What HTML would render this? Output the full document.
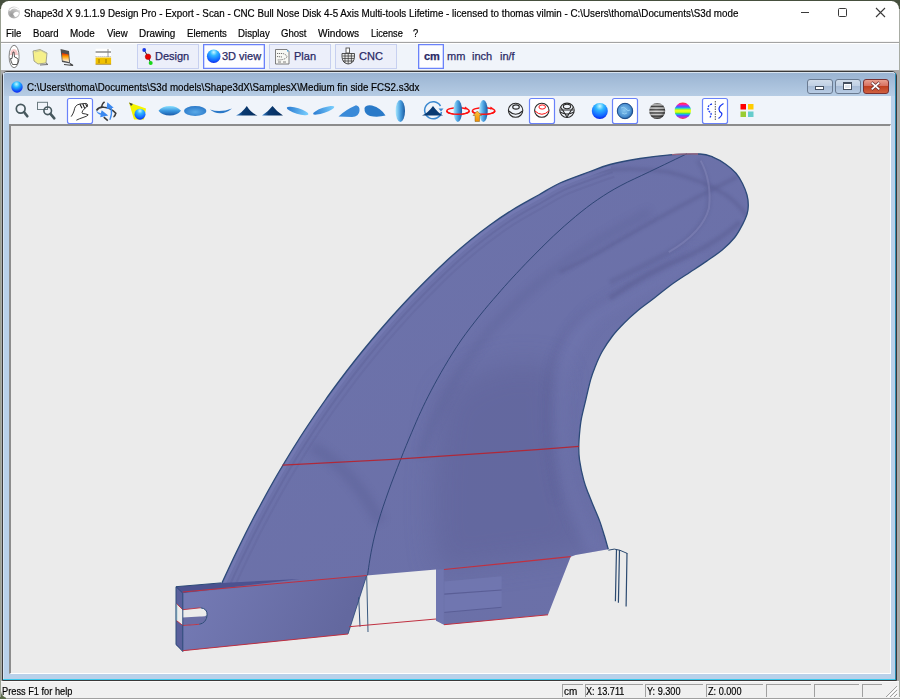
<!DOCTYPE html>
<html><head><meta charset="utf-8">
<style>
*{box-sizing:border-box;margin:0;padding:0}
html,body{width:900px;height:699px;overflow:hidden;position:relative;background:#f0f0f0;font-family:"Liberation Sans",sans-serif;}
.abs{position:absolute}
.r{position:absolute}
.tx{position:absolute;font-size:11px;line-height:13px;white-space:nowrap;color:#000;-webkit-text-stroke:0.2px #000;transform-origin:0 0}
.btn{position:absolute;border:1px solid #c7d0f0;background:#eceffa;}
.btn.on{border:1px solid #6a82fa;background:#fdfdff;box-shadow:inset 0 0 0 0.3px #6a82fa}
.bt{position:absolute;font-size:11px;line-height:13px;white-space:nowrap;color:#2a2a66;-webkit-text-stroke:0.25px #2a2a66}
.sp{position:absolute;top:684px;height:13px;border-top:1px solid #a0a0a0;border-left:1px solid #a0a0a0;}
</style></head><body>
<!-- desktop edges -->
<div class="r" style="left:0;top:0;width:900px;height:1px;background:#46503e"></div>
<div class="r" style="left:0;top:697px;width:900px;height:2px;background:linear-gradient(#f4f4f4 0,#f4f4f4 50%,#a0a0a0 50%)"></div>
<div class="r" style="left:0;top:690px;width:6px;height:9px;background:#5a6a48"></div>
<!-- title bar -->
<div class="r" style="left:1px;top:1px;width:898px;height:41px;background:#fff;border-radius:8px 8px 0 0"></div>
<div class="r" style="left:0;top:1px;width:8px;height:8px;background:#46503e"></div>
<div class="r" style="left:892px;top:1px;width:8px;height:8px;background:#46503e"></div>
<div class="r" style="left:1px;top:1px;width:898px;height:41px;background:#fff;border-radius:8px 8px 0 0"></div>
<div class="r" style="left:0;top:9px;width:1px;height:688px;background:#9aa092"></div>
<div class="r" style="left:899px;top:9px;width:1px;height:688px;background:#a8aca4"></div>
<svg class="abs" style="left:7px;top:5px" width="14" height="14" viewBox="0 0 14 14"><defs><radialGradient id="ig" cx="0.3" cy="0.7" r="0.9"><stop offset="0" stop-color="#999"/><stop offset="1" stop-color="#e0e0e0"/></radialGradient></defs><circle cx="7" cy="7.5" r="6" fill="url(#ig)"/><path d="M2.5 5.5 Q7 0.5 12 5" stroke="#fff" stroke-width="1.3" fill="none"/><path d="M6 9 Q9 5 12 8 Q11 12 8 12 Z" fill="#fff"/></svg>
<div class="tx" style="left:24px;top:7px;transform:scaleX(0.892)">Shape3d X 9.1.1.9 Design Pro - Export - Scan - CNC Bull Nose Disk 4-5 Axis Multi-tools Lifetime - licensed to thomas vilmin - C:\Users\thoma\Documents\S3d mode</div>
<div class="r" style="left:801px;top:12px;width:8px;height:1px;background:#3a3a3a"></div>
<div class="r" style="left:838px;top:8px;width:9px;height:9px;border:1px solid #3a3a3a;border-radius:1.5px"></div>
<svg class="abs" style="left:875px;top:7px" width="11" height="11" viewBox="0 0 11 11"><path d="M1 1L10 10M10 1L1 10" stroke="#3a3a3a" stroke-width="1.1"/></svg>
<!-- menu -->
<div class="tx" style="left:6px;top:27px;transform:scaleX(0.87)">File</div>
<div class="tx" style="left:33px;top:27px;transform:scaleX(0.87)">Board</div>
<div class="tx" style="left:70px;top:27px;transform:scaleX(0.9)">Mode</div>
<div class="tx" style="left:107px;top:27px;transform:scaleX(0.87)">View</div>
<div class="tx" style="left:139px;top:27px;transform:scaleX(0.9)">Drawing</div>
<div class="tx" style="left:187px;top:27px;transform:scaleX(0.87)">Elements</div>
<div class="tx" style="left:238px;top:27px;transform:scaleX(0.88)">Display</div>
<div class="tx" style="left:281px;top:27px;transform:scaleX(0.87)">Ghost</div>
<div class="tx" style="left:318px;top:27px;transform:scaleX(0.92)">Windows</div>
<div class="tx" style="left:371px;top:27px;transform:scaleX(0.84)">License</div>
<div class="tx" style="left:413px;top:27px;transform:scaleX(0.85)">?</div>
<div class="r" style="left:1px;top:41px;width:898px;height:1px;background:#f4f4f4"></div>
<div class="r" style="left:1px;top:42px;width:898px;height:1px;background:#a3a3a3"></div>
<!-- toolbar -->
<div class="r" style="left:1px;top:43px;width:898px;height:27px;background:#f0f4fa;border-top:1px solid #fff"></div>
<div class="btn" style="left:137px;top:44px;width:62px;height:25px"></div>
<div class="btn on" style="left:203px;top:44px;width:62px;height:25px"></div>
<div class="btn" style="left:269px;top:44px;width:62px;height:25px"></div>
<div class="btn" style="left:335px;top:44px;width:62px;height:25px"></div>
<div class="btn on" style="left:418px;top:44px;width:26px;height:25px"></div>
<svg class="abs" style="left:0;top:40px" width="400" height="32" viewBox="0 40 400 32">
<defs>
<radialGradient id="ball1" cx="0.5" cy="0.2" r="0.85"><stop offset="0" stop-color="#c8f8ff"/><stop offset="0.3" stop-color="#30b8ff"/><stop offset="0.75" stop-color="#1060ff"/><stop offset="1" stop-color="#0a10e0"/></radialGradient>
<linearGradient id="flop" x1="0" y1="0" x2="0" y2="1"><stop offset="0" stop-color="#e02000"/><stop offset="0.4" stop-color="#ffa000"/><stop offset="1" stop-color="#fff"/></linearGradient>
</defs>
<!-- surfboard -->
<ellipse cx="14.1" cy="56.5" rx="5" ry="11.2" fill="#fff" stroke="#707070" stroke-width="0.9"/>
<path d="M11 51 Q14 47 17 51 L18 55 L10 55 Z" fill="#f8c8c8"/>
<path d="M13 52 L14 52 L14.5 57 L17 58 Q18.5 59 18 62 L17 64.5 L12.5 64.5 L11 61 L10.5 58.5 L12 58.5 Z" fill="#fff" stroke="#303030" stroke-width="0.8"/>
<!-- folder -->
<path d="M33 51 L40 49.5 L47 53 L46 63 L38 64 L34 61 Z" fill="#f6f08a" stroke="#909080" stroke-width="0.8"/>
<path d="M35 52 L41 50.5 L46 53.5" fill="none" stroke="#c0c0a0" stroke-width="0.8"/>
<path d="M46 63 L48 64.5 L40 65" fill="none" stroke="#707070" stroke-width="1"/>
<!-- floppy -->
<path d="M60.5 49 L69 51 L70 63.5 L62 62 Z" fill="#505050"/>
<path d="M62 53 L68.5 54.5 L69 62 L62.5 60.5 Z" fill="url(#flop)"/>
<path d="M70 63.5 L73 65.5 L64 64.5" fill="none" stroke="#404040" stroke-width="1.2"/>
<!-- ruler -->
<rect x="95.6" y="48.7" width="15.5" height="9" fill="#fff"/>
<path d="M95.6 52 L111 52" stroke="#505050" stroke-width="1"/>
<path d="M95.6 56.5 L111 56.5" stroke="#909090" stroke-width="0.8" stroke-dasharray="1 1"/>
<path d="M108 49 L108 57" stroke="#808080" stroke-width="0.8"/>
<rect x="95.6" y="57.5" width="15.5" height="6.8" fill="#f0c000"/>
<path d="M95.6 64.3 L111.1 64.3" stroke="#a08040" stroke-width="0.8"/>
<path d="M99 59 L99 63 M106 59 L106 63" stroke="#806000" stroke-width="0.8"/>
<!-- design icon -->
<path d="M144.2 50 L148 56.7 L150.7 63" stroke="#303040" stroke-width="1"/>
<circle cx="144.2" cy="50" r="1.9" fill="#1a3ae8"/>
<circle cx="148" cy="56.7" r="2.8" fill="#e80000" stroke="#900" stroke-width="0.4"/>
<circle cx="150.7" cy="63" r="2" fill="#18d818"/>
<!-- 3d ball -->
<circle cx="213.7" cy="56.3" r="6.8" fill="url(#ball1)"/>
<!-- plan -->
<path d="M275.5 49.5 L287 49.5 L289 51.5 L289 64 L275.5 64 Z" fill="#f8f8f4" stroke="#707070" stroke-width="0.9"/>
<path d="M287 49.5 L289 51.5 L287 51.5 Z" fill="#40a0e0"/>
<path d="M277 53.5 L283 53.5 Q287 55 287 57 Q285 60 277 60 M277 56.5 L282 57" fill="none" stroke="#505050" stroke-width="0.8" stroke-dasharray="1.2 0.8"/>
<path d="M278 62 L281 62 M283 62 L286 62" stroke="#606060" stroke-width="0.8"/>
<!-- cnc -->
<rect x="346" y="48" width="3.5" height="5" fill="#fff" stroke="#505050" stroke-width="0.9"/>
<path d="M342 53.5 L354.5 53.5 L354.5 57 Q354 63.5 348.2 64 Q342.5 63.5 342 57 Z" fill="#e8e8e8" stroke="#404040" stroke-width="0.9"/>
<path d="M342.5 56 L354 56 M342.5 58.5 L354 58.5 M343 61 L353.5 61 M345 53.5 L345 63 M348.2 53.5 L348.2 64 M351.4 53.5 L351.4 63" stroke="#303030" stroke-width="0.7"/>
</svg>

<div class="bt" style="left:155px;top:50px">Design</div>
<div class="bt" style="left:222px;top:50px">3D view</div>
<div class="bt" style="left:294px;top:50px">Plan</div>
<div class="bt" style="left:359px;top:50px">CNC</div>
<div class="bt" style="left:424px;top:50px;font-weight:bold">cm</div>
<div class="bt" style="left:447px;top:50px">mm</div>
<div class="bt" style="left:472px;top:50px">inch</div>
<div class="bt" style="left:500px;top:50px">in/f</div>
<!-- workspace + MDI -->
<div class="r" style="left:1px;top:70px;width:898px;height:611px;background:#ababab"></div>
<div class="r" style="left:2px;top:71px;width:895px;height:610px;background:#b9d1ea;border:1px solid #3a3a3a;border-radius:5px 5px 0 0"></div>
<div class="r" style="left:3px;top:72px;width:893px;height:24px;background:linear-gradient(#9ab4d2,#b6cce4);border-radius:4px 4px 0 0;border-top:1px solid #d8e4f0"></div>
<div class="r" style="left:3px;top:73px;width:1px;height:606px;background:#d6e4f2"></div>
<div class="r" style="left:3px;top:679px;width:893px;height:1px;background:#3cc8ec"></div>
<div class="r" style="left:895px;top:73px;width:1px;height:607px;background:#2a8ab0"></div>
<div class="r" style="left:9px;top:96px;width:882px;height:28px;background:#f0f4fa"></div>
<div class="r" style="left:9px;top:124px;width:882px;height:550px;background:#ebebeb;border-left:2px solid #8c8c8c;border-top:2px solid #8c8c8c;border-right:1px solid #fff;border-bottom:1px solid #fff"></div>
<svg class="abs" style="left:11px;top:81px" width="12" height="12" viewBox="0 0 12 12"><defs><radialGradient id="bb" cx="0.45" cy="0.25" r="0.8"><stop offset="0" stop-color="#c0f8ff"/><stop offset="0.35" stop-color="#20b8ff"/><stop offset="1" stop-color="#0a10f0"/></radialGradient></defs><circle cx="6" cy="6" r="5.7" fill="url(#bb)"/></svg>
<div class="tx" style="left:27px;top:81px;transform:scaleX(0.889)">C:\Users\thoma\Documents\S3d models\Shape3dX\SamplesX\Medium fin side FCS2.s3dx</div>
<div class="r" style="left:807px;top:79px;width:26px;height:15px;border:1px solid #6a7a90;border-radius:3px;background:linear-gradient(#d0dcea 0%,#c0d0e4 45%,#a8bcd6 50%,#b8cce4 100%)"></div>
<div class="r" style="left:815px;top:86px;width:9px;height:4px;background:#fff;border:1px solid #445060"></div>
<div class="r" style="left:835px;top:79px;width:26px;height:15px;border:1px solid #6a7a90;border-radius:3px;background:linear-gradient(#d0dcea 0%,#c0d0e4 45%,#a8bcd6 50%,#b8cce4 100%)"></div>
<div class="r" style="left:843px;top:82px;width:9px;height:8px;background:#dfe6ee;border:1px solid #445060;border-top-width:2px;box-shadow:inset 0 0 0 1px #fff"></div>
<div class="r" style="left:863px;top:79px;width:26px;height:15px;border:1px solid #7a3030;border-radius:3px;background:linear-gradient(#e8a090 0%,#d87060 45%,#c04020 50%,#d06040 100%)"></div>
<svg class="abs" style="left:869px;top:80px" width="13" height="12" viewBox="0 0 13 12"><path d="M2.5 2.5L10.5 9.5M10.5 2.5L2.5 9.5" stroke="#6a3030" stroke-width="3"/><path d="M2.7 2.7L10.3 9.3M10.3 2.7L2.7 9.3" stroke="#fff" stroke-width="1.7"/></svg>
<svg class="abs" style="left:0;top:0" width="900" height="130" viewBox="0 0 900 130">
<defs>
<linearGradient id="lb1" x1="0" y1="0" x2="0" y2="1"><stop offset="0" stop-color="#8ae0ff"/><stop offset="0.5" stop-color="#3a98e0"/><stop offset="1" stop-color="#1a5aa8"/></linearGradient>
<radialGradient id="lb2" cx="0.5" cy="0.6" r="0.6"><stop offset="0" stop-color="#5aaae8"/><stop offset="1" stop-color="#2a78c8"/></radialGradient>
<linearGradient id="nv" x1="0" y1="0" x2="1" y2="0"><stop offset="0" stop-color="#3a8ad8"/><stop offset="0.3" stop-color="#0a3a72"/><stop offset="1" stop-color="#052c5c"/></linearGradient>
<linearGradient id="bl3" x1="0" y1="0" x2="1" y2="0"><stop offset="0" stop-color="#2a7ad0"/><stop offset="1" stop-color="#7ad0ff"/></linearGradient>
<linearGradient id="lens" x1="0" y1="0" x2="1" y2="0"><stop offset="0" stop-color="#a8e8ff"/><stop offset="0.5" stop-color="#4aa0e0"/><stop offset="1" stop-color="#1a5aa0"/></linearGradient>
<radialGradient id="ball" cx="0.5" cy="0.2" r="0.85"><stop offset="0" stop-color="#c8f8ff"/><stop offset="0.3" stop-color="#30b8ff"/><stop offset="0.75" stop-color="#1060ff"/><stop offset="1" stop-color="#0a10e0"/></radialGradient>
<radialGradient id="tball" cx="0.45" cy="0.45" r="0.6"><stop offset="0" stop-color="#8ac8f0"/><stop offset="0.7" stop-color="#4a90d0"/><stop offset="1" stop-color="#1a5090"/></radialGradient>
<linearGradient id="sball" x1="0" y1="0" x2="0" y2="1"><stop offset="0" stop-color="#606060"/><stop offset="0.12" stop-color="#d0d0d0"/><stop offset="0.22" stop-color="#404040"/><stop offset="0.32" stop-color="#e8e8e8"/><stop offset="0.42" stop-color="#303030"/><stop offset="0.52" stop-color="#f0f0f0"/><stop offset="0.62" stop-color="#303030"/><stop offset="0.72" stop-color="#d8d8d8"/><stop offset="0.82" stop-color="#404040"/><stop offset="0.92" stop-color="#b0b0b0"/><stop offset="1" stop-color="#505050"/></linearGradient>
<linearGradient id="rball" x1="0" y1="0" x2="0" y2="1"><stop offset="0" stop-color="#ff3a3a"/><stop offset="0.2" stop-color="#a040ff"/><stop offset="0.35" stop-color="#20c0ff"/><stop offset="0.5" stop-color="#e0ff20"/><stop offset="0.65" stop-color="#20d060"/><stop offset="0.8" stop-color="#8040ff"/><stop offset="1" stop-color="#ff3030"/></linearGradient>
<linearGradient id="orng" x1="0" y1="0" x2="0" y2="1"><stop offset="0" stop-color="#ffc040"/><stop offset="1" stop-color="#f09000"/></linearGradient>
<radialGradient id="rball2" cx="0.5" cy="0.5" r="0.5" gradientTransform="translate(0.5 0.5) scale(1 0.62) translate(-0.5 -0.5)"><stop offset="0" stop-color="#ffff40"/><stop offset="0.35" stop-color="#a0f020"/><stop offset="0.55" stop-color="#20d0e0"/><stop offset="0.75" stop-color="#8040ff"/><stop offset="0.9" stop-color="#ff3080"/><stop offset="1" stop-color="#ff4040"/></radialGradient>
<radialGradient id="shade" cx="0.45" cy="0.4" r="0.6"><stop offset="0" stop-color="#fff" stop-opacity="0.1"/><stop offset="0.7" stop-color="#000" stop-opacity="0.1"/><stop offset="1" stop-color="#000" stop-opacity="0.55"/></radialGradient>
<linearGradient id="rball3" x1="0" y1="0" x2="0" y2="1"><stop offset="0" stop-color="#ff3030"/><stop offset="0.12" stop-color="#ff20a0"/><stop offset="0.2" stop-color="#8040ff"/><stop offset="0.28" stop-color="#3070ff"/><stop offset="0.34" stop-color="#20d0e0"/><stop offset="0.4" stop-color="#80f040"/><stop offset="0.46" stop-color="#e8ff20"/><stop offset="0.58" stop-color="#e0ff10"/><stop offset="0.66" stop-color="#40e060"/><stop offset="0.72" stop-color="#20b0f0"/><stop offset="0.8" stop-color="#5050ff"/><stop offset="0.88" stop-color="#c030e0"/><stop offset="1" stop-color="#ff3030"/></linearGradient>
</defs>
<!-- magnifier -->
<circle cx="20.7" cy="108.7" r="4.4" fill="none" stroke="#47585e" stroke-width="1.7"/>
<path d="M24 112 L27.3 116.3" stroke="#47585e" stroke-width="2.6" stroke-linecap="round"/>
<!-- zoom window -->
<rect x="37.5" y="102.3" width="10" height="7.2" fill="none" stroke="#6a7a80" stroke-width="1"/>
<circle cx="47.7" cy="110.8" r="3.8" fill="none" stroke="#47585e" stroke-width="1.6"/>
<path d="M50.5 113.8 L54.3 118.3" stroke="#47585e" stroke-width="2.6" stroke-linecap="round"/>
<!-- hand button -->
<rect x="67.5" y="98.5" width="25" height="25" rx="2" fill="#fff" stroke="#6a82fa" stroke-width="1.2"/>
<path d="M71.2 116.6 Q73 114 74 111 Q74.5 108 75.5 106.5 Q77 104.5 80 104 L86 103.4 Q88 104 87.6 105.8 Q84.5 108.5 82.8 110.6 Q81.5 112.5 82.5 113.5 Q86 113.8 88.2 114.8 Q87.5 116.2 83 117.5 Q79 118.8 76.4 120.2" fill="none" stroke="#1e1e1e" stroke-width="0.9"/>
<path d="M80 104.2 L82 108.2 M82.8 103.8 L84.8 108.6 M85.6 104.2 L87.4 107" stroke="#1e1e1e" stroke-width="1.1"/>
<!-- rotate 3d -->
<path d="M96.5 110.5 Q99 106.5 104 107.3 Q111 108 115.8 113.3 Q115 116.5 113.5 117" fill="none" stroke="#3a3a3a" stroke-width="1.6"/>
<path d="M104.6 101.8 Q101.5 104 101.7 108" fill="none" stroke="#3a3a3a" stroke-width="1.5"/>
<path d="M103.8 117.2 L107.8 120.6" stroke="#3a3a3a" stroke-width="1.6"/>
<path d="M96.2 110.2 Q97.5 112.5 100.8 113.2 L101.7 110.3 L108.2 115.6 L100.2 117.2 L100.7 114.8 Q97 114 96.2 110.2 Z" fill="#3a88f0"/>
<path d="M109.3 119.8 Q111.5 114.5 110.6 108.4 L106.6 108.9 L107.3 102.3 L113.7 107.7 L111.9 108 Q113 114.5 110.4 120 Z" fill="#3a88f0"/>
<!-- light -->
<path d="M129 102.5 L146 108.5 L144 119.5 L134 119.5 Z" fill="#f4f400"/>
<path d="M129 102.5 L133 104 L131 106 Z" fill="#404040"/>
<circle cx="140" cy="114.2" r="5.5" fill="url(#ball)"/>
<!-- ellipses -->
<path d="M158.5 110.8 Q162 106 170 106 Q177 106 181 110.8 Q177 115.5 170 115.5 Q162 115.5 158.5 110.8 Z" fill="url(#lb1)"/>
<ellipse cx="195.2" cy="111" rx="11.2" ry="5" fill="url(#lb2)"/>
<path d="M210 109.5 Q220 113 232 108.5 Q226 113.5 220 113.3 Q214 113 210 109.5 Z" fill="#2a78c8"/>
<!-- triangles -->
<path d="M236 115.5 Q242 113 246.8 106 Q251 113 257.5 115.5 Z" fill="url(#nv)"/>
<path d="M262 115.5 Q268 112 272.5 106 Q277 112 283 115.5 Z" fill="url(#nv)"/>
<!-- blades -->
<ellipse cx="297.6" cy="111" rx="11.3" ry="2.8" fill="url(#bl3)" transform="rotate(17 297.6 111)"/>
<ellipse cx="323.7" cy="110.3" rx="11.2" ry="2.6" fill="url(#bl3)" transform="rotate(-19 323.7 110.3)"/>
<path d="M338.5 116.5 Q345 110 356 105.2 Q360 106 359.5 111 Q359 116.5 352 117 Z" fill="#3a8ad8"/>
<path d="M364.5 108 Q366 104.5 372 105.5 Q381 108 385.5 115.5 Q378 117.5 370 116 Q364 114 364.5 108 Z" fill="#2a7ac8"/>
<ellipse cx="400.3" cy="111" rx="4.7" ry="11" fill="url(#lens)"/>
<!-- rotate triangle -->
<path d="M440.5 106 A8.5 8.5 0 1 0 441.5 112" fill="none" stroke="#3a88d0" stroke-width="1.5"/>
<path d="M438.5 108.5 L443.5 108.5 L441 111.5 Z" fill="#3a88d0"/>
<path d="M422 115.5 Q428 113 433 106 Q438 113 443 115.5 Z" fill="#0a3a72"/>
<!-- lens with ring -->
<ellipse cx="458" cy="111" rx="11.2" ry="3.3" fill="none" stroke="#ff1010" stroke-width="1.4"/>
<ellipse cx="457.8" cy="111" rx="4.3" ry="11" fill="url(#lens)"/>
<path d="M446.8 111 A11.2 3.3 0 0 0 469.2 111" fill="none" stroke="#ff1010" stroke-width="1.4"/>
<path d="M465 106.5 L468 108.5 L464.5 109.5 Z" fill="#ff1010"/>
<ellipse cx="483.6" cy="111" rx="11.2" ry="3.3" fill="none" stroke="#ff1010" stroke-width="1.4"/>
<ellipse cx="483.4" cy="111" rx="4.3" ry="11" fill="url(#lens)"/>
<path d="M472.4 111 A11.2 3.3 0 0 0 494.8 111" fill="none" stroke="#ff1010" stroke-width="1.4"/>
<path d="M490.5 106.5 L493.5 108.5 L490 109.5 Z" fill="#ff1010"/>
<path d="M477.3 111 L481.5 115.5 L479.5 115.5 L479.5 121.5 L475 121.5 L475 115.5 L473 115.5 Z" fill="url(#orng)" stroke="#806020" stroke-width="0.5"/>
<!-- cups -->
<g fill="none" stroke="#2a2a2a" stroke-width="1.1">
<ellipse cx="515.6" cy="110.3" rx="7.2" ry="7"/>
<ellipse cx="516" cy="107" rx="3.3" ry="2.1"/>
<path d="M508.8 111 Q515.7 117.5 522.6 111"/>
</g>
<rect x="529.5" y="98.5" width="25" height="25" rx="2" fill="#fff" stroke="#6a82fa" stroke-width="1.2"/>
<g fill="none" stroke="#2a2a2a" stroke-width="1.1">
<ellipse cx="541.8" cy="110.3" rx="7.2" ry="7"/>
</g>
<g fill="none" stroke="#ff1010" stroke-width="1">
<ellipse cx="542.2" cy="107" rx="3.3" ry="2.1"/>
<path d="M535 111 Q541.9 117.5 548.8 111"/>
</g>
<g fill="none" stroke="#2a2a2a" stroke-width="1.1">
<circle cx="567" cy="110.3" r="7.2"/>
<ellipse cx="567" cy="106.5" rx="3.6" ry="2.2"/>
<path d="M560 112 Q567 116 574 112 M561 107.5 L567 117 L573 107.5 M560.5 110 L573.5 110"/>
</g>
<!-- balls -->
<circle cx="599.8" cy="111" r="8" fill="url(#ball)"/>
<rect x="612.5" y="98.5" width="25" height="25" rx="2" fill="#fff" stroke="#6a82fa" stroke-width="1.2"/>
<circle cx="625" cy="111" r="7.7" fill="url(#tball)" stroke="#1a4a88" stroke-width="1"/>
<path d="M621 108 Q624 106 626 109 Q628 112 630 110 M622 113 Q625 115 627 113" fill="none" stroke="#a0d8f8" stroke-width="0.8"/>
<circle cx="657.2" cy="111" r="8" fill="url(#sball)"/><circle cx="657.2" cy="111" r="8" fill="url(#shade)"/>
<circle cx="682.8" cy="110.8" r="8.2" fill="url(#rball3)"/>
<!-- S|S -->
<rect x="702.5" y="98.5" width="25" height="25" rx="2" fill="#fff" stroke="#6a82fa" stroke-width="1.2"/>
<path d="M712 104 Q708 105 708 108.5 Q708 111 710.5 112.5 Q712 114 710 117.5" fill="none" stroke="#1a3af0" stroke-width="1.3" stroke-dasharray="2 1"/>
<path d="M723.5 103.5 Q719 106 719 109 Q719 111.5 721.5 113 Q723 115 718.5 118.5" fill="none" stroke="#1a3af0" stroke-width="1.3"/>
<path d="M715.3 101 L715.3 121" stroke="#404040" stroke-width="0.9" stroke-dasharray="1.5 1"/>
<!-- colour squares -->
<rect x="740.5" y="104" width="5.5" height="5.5" fill="#f00"/>
<rect x="748" y="104" width="5.5" height="5.5" fill="#ffcc00"/>
<rect x="740.5" y="111.5" width="5.5" height="5.5" fill="#99cc33"/>
<rect x="748" y="111.5" width="5.5" height="5.5" fill="#66cccc"/>
</svg>

<svg class="abs" style="left:0;top:0" width="900" height="699" viewBox="0 0 900 699">
<defs>
<linearGradient id="fg" x1="0" y1="0" x2="1" y2="1"><stop offset="0" stop-color="#6d73ab"/><stop offset="1" stop-color="#6a6fa7"/></linearGradient>
<filter id="bl" x="-20%" y="-20%" width="140%" height="140%"><feGaussianBlur stdDeviation="6"/></filter>
<filter id="blz" x="-30%" y="-30%" width="160%" height="160%"><feGaussianBlur stdDeviation="14"/></filter>
<filter id="bl4" x="-30%" y="-30%" width="160%" height="160%"><feGaussianBlur stdDeviation="3.5"/></filter>
<filter id="bl5" x="-30%" y="-30%" width="160%" height="160%"><feGaussianBlur stdDeviation="0.6"/></filter>
<filter id="bl2" x="-20%" y="-20%" width="140%" height="140%"><feGaussianBlur stdDeviation="1.5"/></filter>
<linearGradient id="blk" gradientUnits="userSpaceOnUse" x1="200" y1="585" x2="330" y2="650"><stop offset="0" stop-color="#7379b3"/><stop offset="1" stop-color="#63689f"/></linearGradient>
<clipPath id="fc"><path d="M176,586.7 L221.9,583.0 C223.7,579.2 229.2,567.2 232.6,560.0 C236.0,552.8 239.0,546.7 242.3,540.0 C245.6,533.3 248.9,526.7 252.4,520.0 C255.9,513.3 259.5,506.7 263.1,500.0 C266.7,493.3 270.4,486.7 274.2,480.0 C278.0,473.3 282.0,466.7 286.0,460.0 C290.0,453.3 294.1,446.7 298.4,440.0 C302.6,433.3 307.0,426.7 311.5,420.0 C316.0,413.3 320.6,406.7 325.3,400.0 C330.0,393.3 334.9,386.7 339.9,380.0 C344.9,373.3 350.0,366.7 355.3,360.0 C360.6,353.3 366.0,346.7 371.6,340.0 C377.2,333.3 382.9,326.7 388.8,320.0 C394.7,313.3 400.8,306.7 407.1,300.0 C413.4,293.3 419.9,286.7 426.6,280.0 C433.3,273.3 440.1,266.7 447.4,260.0 C454.7,253.3 463.4,245.8 470.5,240.0 C477.6,234.2 483.1,230.0 490.0,225.0 C496.9,220.0 504.1,215.0 512.2,210.0 C520.3,205.0 530.6,199.5 538.6,195.0 C546.6,190.5 551.4,186.9 560.0,183.0 C568.6,179.1 581.7,174.6 590.0,171.5 C598.3,168.4 601.7,166.7 610.0,164.5 C618.3,162.3 630.0,160.1 640.0,158.5 C650.0,156.9 660.0,155.6 670.0,154.8 C680.0,154.1 692.9,153.6 700.0,154.0 C707.1,154.4 708.6,155.4 712.9,157.1 C717.2,158.8 721.9,161.5 725.7,164.2 C729.6,166.9 733.2,170.0 736.0,173.2 C738.8,176.4 740.7,179.9 742.5,183.5 C744.3,187.1 746.0,191.4 747.0,195.0 C748.0,198.6 748.3,202.1 748.3,205.3 C748.3,208.5 748.0,211.2 747.0,214.4 C746.0,217.6 744.5,220.8 742.5,224.6 C740.5,228.4 738.1,233.3 734.7,237.5 C731.3,241.7 726.9,246.1 722.2,250.0 C717.5,253.9 712.1,257.4 706.7,261.1 C701.3,264.8 695.6,268.5 690.0,272.2 C684.4,275.9 679.7,278.7 673.3,283.3 C666.9,287.9 657.6,295.5 651.7,300.0 C645.9,304.5 642.8,306.4 638.2,310.3 C633.6,314.2 628.3,318.9 624.0,323.2 C619.7,327.5 616.1,331.3 612.5,336.0 C608.9,340.7 605.1,346.4 602.2,351.5 C599.3,356.6 597.0,362.2 595.1,366.9 C593.2,371.6 592.1,374.4 590.6,379.8 C589.1,385.2 587.4,392.8 585.9,399.3 C584.4,405.8 582.5,412.8 581.4,418.6 C580.3,424.4 579.9,429.3 579.5,434.0 C579.1,438.7 578.8,442.6 578.8,446.9 C578.8,451.2 578.7,454.2 579.5,459.8 C580.3,465.4 582.3,474.8 583.8,480.4 C585.3,486.0 586.6,488.8 588.3,493.3 C590.0,497.8 592.2,502.8 594.1,507.5 C596.0,512.2 598.2,516.9 599.9,521.6 C601.6,526.3 603.0,531.2 604.4,535.8 C605.8,540.4 607.6,547.0 608.3,549.3 L575.5,555 L570.7,556.7 L548,614.8 L444,624.7 L436,620.7 L436,569.5 L366.7,575.5 L348,634 L182.7,650.7 L176,645.3 Z"/></clipPath>
</defs>
<path d="M176,586.7 L221.9,583.0 C223.7,579.2 229.2,567.2 232.6,560.0 C236.0,552.8 239.0,546.7 242.3,540.0 C245.6,533.3 248.9,526.7 252.4,520.0 C255.9,513.3 259.5,506.7 263.1,500.0 C266.7,493.3 270.4,486.7 274.2,480.0 C278.0,473.3 282.0,466.7 286.0,460.0 C290.0,453.3 294.1,446.7 298.4,440.0 C302.6,433.3 307.0,426.7 311.5,420.0 C316.0,413.3 320.6,406.7 325.3,400.0 C330.0,393.3 334.9,386.7 339.9,380.0 C344.9,373.3 350.0,366.7 355.3,360.0 C360.6,353.3 366.0,346.7 371.6,340.0 C377.2,333.3 382.9,326.7 388.8,320.0 C394.7,313.3 400.8,306.7 407.1,300.0 C413.4,293.3 419.9,286.7 426.6,280.0 C433.3,273.3 440.1,266.7 447.4,260.0 C454.7,253.3 463.4,245.8 470.5,240.0 C477.6,234.2 483.1,230.0 490.0,225.0 C496.9,220.0 504.1,215.0 512.2,210.0 C520.3,205.0 530.6,199.5 538.6,195.0 C546.6,190.5 551.4,186.9 560.0,183.0 C568.6,179.1 581.7,174.6 590.0,171.5 C598.3,168.4 601.7,166.7 610.0,164.5 C618.3,162.3 630.0,160.1 640.0,158.5 C650.0,156.9 660.0,155.6 670.0,154.8 C680.0,154.1 692.9,153.6 700.0,154.0 C707.1,154.4 708.6,155.4 712.9,157.1 C717.2,158.8 721.9,161.5 725.7,164.2 C729.6,166.9 733.2,170.0 736.0,173.2 C738.8,176.4 740.7,179.9 742.5,183.5 C744.3,187.1 746.0,191.4 747.0,195.0 C748.0,198.6 748.3,202.1 748.3,205.3 C748.3,208.5 748.0,211.2 747.0,214.4 C746.0,217.6 744.5,220.8 742.5,224.6 C740.5,228.4 738.1,233.3 734.7,237.5 C731.3,241.7 726.9,246.1 722.2,250.0 C717.5,253.9 712.1,257.4 706.7,261.1 C701.3,264.8 695.6,268.5 690.0,272.2 C684.4,275.9 679.7,278.7 673.3,283.3 C666.9,287.9 657.6,295.5 651.7,300.0 C645.9,304.5 642.8,306.4 638.2,310.3 C633.6,314.2 628.3,318.9 624.0,323.2 C619.7,327.5 616.1,331.3 612.5,336.0 C608.9,340.7 605.1,346.4 602.2,351.5 C599.3,356.6 597.0,362.2 595.1,366.9 C593.2,371.6 592.1,374.4 590.6,379.8 C589.1,385.2 587.4,392.8 585.9,399.3 C584.4,405.8 582.5,412.8 581.4,418.6 C580.3,424.4 579.9,429.3 579.5,434.0 C579.1,438.7 578.8,442.6 578.8,446.9 C578.8,451.2 578.7,454.2 579.5,459.8 C580.3,465.4 582.3,474.8 583.8,480.4 C585.3,486.0 586.6,488.8 588.3,493.3 C590.0,497.8 592.2,502.8 594.1,507.5 C596.0,512.2 598.2,516.9 599.9,521.6 C601.6,526.3 603.0,531.2 604.4,535.8 C605.8,540.4 607.6,547.0 608.3,549.3 L575.5,555 L570.7,556.7 L548,614.8 L444,624.7 L436,620.7 L436,569.5 L366.7,575.5 L348,634 L182.7,650.7 L176,645.3 Z" fill="url(#fg)"/>
<g clip-path="url(#fc)">
<path d="M445,395 Q500,350 560,370 Q555,460 590,550 L440,570 Q425,500 445,395 Z" fill="#5d6196" opacity="0.5" filter="url(#blz)"/>
<path d="M700,255 Q640,290 600,310 Q568,335 562,385 Q558,440 570,490 Q580,525 598,552" fill="none" stroke="#767cb6" stroke-width="14" opacity="0.35" filter="url(#bl)"/>
<path d="M690,252 Q620,290 585,312 Q552,338 548,385 Q544,440 556,500" fill="none" stroke="#5a5d92" stroke-width="5" opacity="0.25" filter="url(#bl4)"/>
<path d="M737,177 Q680,205 620,240 Q590,258 560,272" fill="none" stroke="#5a5d92" stroke-width="4" opacity="0.45" filter="url(#bl2)"/>
<path d="M560,180 Q610,163 668.7,172 Q703,180 725.9,194.9 Q740,205 748,218" fill="none" stroke="#5a5d92" stroke-width="4" opacity="0.45" filter="url(#bl2)"/>
<path d="M610,298 Q645.8,272.8 690,255 Q720,240 740,222" fill="none" stroke="#5a5d92" stroke-width="5" opacity="0.45" filter="url(#bl2)"/>
<path d="M698,160 Q712,182 708,208 Q702,232 668.7,252.2 Q640,268 610,282" fill="none" stroke="#5a5d92" stroke-width="5" opacity="0.35" filter="url(#bl2)"/>
<path d="M700.7,160.6 Q712,182 709,208 Q703,232 668.7,252.2" fill="none" stroke="#9496c6" stroke-width="2" opacity="0.35" filter="url(#bl5)"/>
<path d="M224.2,584.1 C225.9,580.2 231.5,568.2 234.9,561.1 C238.3,553.9 241.2,547.8 244.5,541.1 C247.8,534.5 251.2,527.8 254.6,521.2 C258.1,514.5 261.7,507.8 265.3,501.2 C268.9,494.5 272.6,487.9 276.4,481.2 C280.2,474.6 284.1,467.9 288.1,461.3 C292.2,454.6 296.3,448.0 300.5,441.3 C304.7,434.7 309.1,428.0 313.6,421.4 C318.0,414.7 322.6,408.1 327.3,401.4 C332.1,394.8 336.9,388.1 341.9,381.5 C346.9,374.9 352.0,368.2 357.3,361.6 C362.5,354.9 367.9,348.3 373.5,341.6 C379.1,335.0 384.8,328.3 390.7,321.7 C396.6,315.0 402.6,308.4 408.9,301.7 C415.2,295.1 421.7,288.4 428.4,281.8 C435.1,275.1 441.8,268.5 449.1,261.8 C456.4,255.2 465.0,247.7 472.1,241.9 C479.1,236.1 484.6,232.0 491.5,227.0 C498.4,222.1 505.5,217.1 513.5,212.1 C521.6,207.2 531.9,201.7 539.8,197.2 C547.8,192.7 552.5,189.2 561.0,185.3 C569.5,181.4 582.6,176.9 590.9,173.8 C599.2,170.8 607.5,168.0 610.8,166.9" fill="none" stroke="#7a80ba" stroke-width="3" opacity="0.5"/>
<path d="M229.2,586.4 C230.9,582.6 236.4,570.6 239.8,563.4 C243.2,556.3 246.2,550.2 249.5,543.5 C252.7,536.9 256.1,530.3 259.5,523.7 C262.9,517.1 266.5,510.4 270.1,503.8 C273.7,497.2 277.4,490.6 281.1,484.0 C284.9,477.4 288.8,470.8 292.8,464.1 C296.8,457.5 300.9,450.9 305.1,444.3 C309.4,437.7 313.7,431.1 318.1,424.5 C322.6,417.9 327.1,411.2 331.8,404.6 C336.5,398.0 341.3,391.4 346.3,384.8 C351.3,378.2 356.3,371.6 361.6,365.0 C366.8,358.4 372.2,351.7 377.7,345.1 C383.3,338.5 388.9,331.9 394.8,325.3 C400.6,318.7 406.7,312.1 412.9,305.5 C419.2,298.9 425.6,292.3 432.2,285.7 C438.9,279.1 445.6,272.5 452.8,265.9 C460.0,259.3 468.6,251.9 475.6,246.2 C482.6,240.4 487.9,236.4 494.7,231.5 C501.5,226.6 508.4,221.7 516.4,216.8 C524.4,211.9 534.7,206.4 542.5,202.0 C550.4,197.5 555.0,194.1 563.3,190.3 C571.7,186.4 584.6,182.0 592.8,179.0 C601.0,176.0 609.3,173.2 612.6,172.1" fill="none" stroke="#5c6096" stroke-width="2" opacity="0.35" filter="url(#bl5)"/>
<path d="M233.7,588.5 C235.5,584.7 241.0,572.7 244.3,565.6 C247.7,558.5 250.7,552.4 254.0,545.8 C257.2,539.2 260.5,532.6 263.9,526.0 C267.4,519.4 270.9,512.8 274.5,506.2 C278.1,499.6 281.7,493.0 285.5,486.5 C289.2,479.9 293.1,473.3 297.1,466.7 C301.1,460.2 305.2,453.6 309.4,447.0 C313.6,440.4 317.9,433.8 322.3,427.3 C326.7,420.7 331.2,414.1 335.9,407.5 C340.6,401.0 345.4,394.4 350.3,387.8 C355.2,381.2 360.3,374.6 365.5,368.1 C370.7,361.5 376.1,354.9 381.6,348.3 C387.1,341.8 392.7,335.2 398.5,328.6 C404.4,322.1 410.3,315.5 416.5,308.9 C422.8,302.4 429.2,295.8 435.8,289.2 C442.4,282.7 449.0,276.1 456.2,269.6 C463.3,263.1 471.8,255.7 478.8,250.0 C485.7,244.4 490.9,240.4 497.6,235.6 C504.3,230.7 511.1,225.9 519.0,221.1 C526.9,216.2 537.3,210.7 545.0,206.3 C552.7,201.9 557.2,198.6 565.4,194.8 C573.7,191.1 586.4,186.7 594.5,183.7 C602.7,180.7 611.0,177.9 614.3,176.8" fill="none" stroke="#5c6096" stroke-width="2" opacity="0.25" filter="url(#bl5)"/>
<path d="M650,212 Q550,262 490,330 Q445,385 420,455" fill="none" stroke="#5c6096" stroke-width="9" opacity="0.3" filter="url(#bl4)"/>
<path d="M312,447 Q352,468 380,522" fill="none" stroke="#5c6096" stroke-width="12" opacity="0.4" filter="url(#bl4)"/>
<path d="M176,586.7 L221.1,582.9 L300,579 L182.8,593.2 Z" fill="#4c5290"/>
<path d="M176,586.7 L182.8,593.2 L182.8,651.6 L176,644.3 Z" fill="#5a609c"/>
<path d="M182.8,593.2 L366.7,575.5 L348,634 L182.8,651.6 Z" fill="url(#blk)"/>
<path d="M444.3,581.5 L501.6,576.3 L501.6,607.3 L444.3,612.4 Z" fill="#7278b2" opacity="0.8"/>
<path d="M444.3,594.1 L501.6,590" stroke="#5a5e96" stroke-width="1.2"/>
<path d="M444.3,612.4 L501.6,607.3" stroke="#5a5e96" stroke-width="1"/>
<path d="M436,569.5 L443.7,569.5 L443.7,625.6 L436,618.7 Z" fill="#7278b2" opacity="0.8"/>
</g>
<!-- slot -->
<path d="M176.5,603.6 L182.8,609.7 L200.4,607.8 Q207.5,608.5 207.1,615.1 Q206.5,623 199.2,624.3 L182.8,625.5 L176.5,620.6 Z" fill="#ebebeb"/>
<path d="M182.8,617.5 L200,616.5 Q205,617 207,615 Q206.5,623 199.2,624.3 L182.8,625.5 Z" fill="#6a6ea6"/>
<path d="M176.5,604 L176.5,620.5" stroke="#a8d0d8" stroke-width="2"/>
<path d="M200.4,607.8 Q207.5,608.5 207.1,615.1 Q206.5,623 199.2,624.3" fill="none" stroke="#2c4a78" stroke-width="1"/>
<path d="M176.5,603.6 L182.8,609.7 L200.4,607.8" fill="none" stroke="#c03040" stroke-width="0.9"/>
<path d="M176.5,620.6 L182.8,625.5 L199.2,624.3" fill="none" stroke="#c03040" stroke-width="0.9"/>
<path d="M176,586.7 L176,644.3 L182.8,651.6 L182.8,593.2 L176,586.7 L221.1,582.9" fill="none" stroke="#2c4a78" stroke-width="1"/>
<path d="M358.7,597.3 L360,626.7" stroke="#2c4a78" stroke-width="1"/>
<path d="M348,634 L366.7,575.5" stroke="#2c4a78" stroke-width="0.8"/>
<path d="M608.4,550.2 L614.3,549.1 L619.7,550.2 L627.2,553.4" fill="none" stroke="#2c4a70" stroke-width="1"/>
<path d="M616.5,549 L615.4,601.2 M619.5,550 L618.4,602.8 M627,553 L626.1,606.6" stroke="#2c4a70" stroke-width="1.2"/>

<path d="M221.9,583.0 C223.7,579.2 229.2,567.2 232.6,560.0 C236.0,552.8 239.0,546.7 242.3,540.0 C245.6,533.3 248.9,526.7 252.4,520.0 C255.9,513.3 259.5,506.7 263.1,500.0 C266.7,493.3 270.4,486.7 274.2,480.0 C278.0,473.3 282.0,466.7 286.0,460.0 C290.0,453.3 294.1,446.7 298.4,440.0 C302.6,433.3 307.0,426.7 311.5,420.0 C316.0,413.3 320.6,406.7 325.3,400.0 C330.0,393.3 334.9,386.7 339.9,380.0 C344.9,373.3 350.0,366.7 355.3,360.0 C360.6,353.3 366.0,346.7 371.6,340.0 C377.2,333.3 382.9,326.7 388.8,320.0 C394.7,313.3 400.8,306.7 407.1,300.0 C413.4,293.3 419.9,286.7 426.6,280.0 C433.3,273.3 440.1,266.7 447.4,260.0 C454.7,253.3 463.4,245.8 470.5,240.0 C477.6,234.2 483.1,230.0 490.0,225.0 C496.9,220.0 504.1,215.0 512.2,210.0 C520.3,205.0 530.6,199.5 538.6,195.0 C546.6,190.5 551.4,186.9 560.0,183.0 C568.6,179.1 581.7,174.6 590.0,171.5 C598.3,168.4 601.7,166.7 610.0,164.5 C618.3,162.3 630.0,160.1 640.0,158.5 C650.0,156.9 660.0,155.6 670.0,154.8 C680.0,154.1 692.9,153.6 700.0,154.0 C707.1,154.4 708.6,155.4 712.9,157.1 C717.2,158.8 721.9,161.5 725.7,164.2 C729.6,166.9 733.2,170.0 736.0,173.2 C738.8,176.4 740.7,179.9 742.5,183.5 C744.3,187.1 746.0,191.4 747.0,195.0 C748.0,198.6 748.3,202.1 748.3,205.3 C748.3,208.5 748.0,211.2 747.0,214.4 C746.0,217.6 744.5,220.8 742.5,224.6 C740.5,228.4 738.1,233.3 734.7,237.5 C731.3,241.7 726.9,246.1 722.2,250.0 C717.5,253.9 712.1,257.4 706.7,261.1 C701.3,264.8 695.6,268.5 690.0,272.2 C684.4,275.9 679.7,278.7 673.3,283.3 C666.9,287.9 657.6,295.5 651.7,300.0 C645.9,304.5 642.8,306.4 638.2,310.3 C633.6,314.2 628.3,318.9 624.0,323.2 C619.7,327.5 616.1,331.3 612.5,336.0 C608.9,340.7 605.1,346.4 602.2,351.5 C599.3,356.6 597.0,362.2 595.1,366.9 C593.2,371.6 592.1,374.4 590.6,379.8 C589.1,385.2 587.4,392.8 585.9,399.3 C584.4,405.8 582.5,412.8 581.4,418.6 C580.3,424.4 579.9,429.3 579.5,434.0 C579.1,438.7 578.8,442.6 578.8,446.9 C578.8,451.2 578.7,454.2 579.5,459.8 C580.3,465.4 582.3,474.8 583.8,480.4 C585.3,486.0 586.6,488.8 588.3,493.3 C590.0,497.8 592.2,502.8 594.1,507.5 C596.0,512.2 598.2,516.9 599.9,521.6 C601.6,526.3 603.0,531.2 604.4,535.8 C605.8,540.4 607.6,547.0 608.3,549.3" fill="none" stroke="#2c4a78" stroke-width="1.3"/>
<path d="M687.0,153.7 C680.8,156.7 660.7,166.4 649.6,171.7 C638.6,177.0 629.5,180.9 620.9,185.5 C612.3,190.1 605.4,194.3 597.8,199.5 C590.2,204.6 583.0,210.3 575.6,216.4 C568.2,222.5 560.7,229.2 553.3,236.1 C545.9,243.1 538.0,251.1 531.1,258.1 C524.2,265.1 517.9,271.9 512.2,278.0 C506.6,284.1 502.6,288.6 497.3,294.8 C491.9,300.9 486.2,307.5 480.2,315.0 C474.1,322.6 467.1,331.6 461.2,340.1 C455.3,348.6 449.7,357.7 444.7,366.2 C439.7,374.6 435.1,383.1 431.1,390.7 C427.1,398.3 424.0,404.6 420.8,411.6 C417.5,418.6 415.0,424.7 411.6,432.7 C408.2,440.7 404.3,450.0 400.5,459.8 C396.7,469.5 392.2,480.7 388.6,490.9 C385.0,501.1 381.4,511.3 378.6,521.0 C375.8,530.6 373.6,539.6 371.8,548.7 C369.9,557.8 368.2,570.9 367.5,575.3" fill="none" stroke="#27406e" stroke-width="0.9"/>
<path d="M672,154.6 Q685,153.6 698,154" fill="none" stroke="#c87080" stroke-width="1.4" opacity="0.7"/>
<path d="M366.7,575.5 L368,632" stroke="#3a5a80" stroke-width="1"/>
<path d="M282.5,465.2 Q430,458.2 579,446.3" fill="none" stroke="#b02838" stroke-width="1.2"/>
<path d="M182.7,592 L366.7,575.5" stroke="#c03040" stroke-width="1"/>
<path d="M182.7,650.7 L348,634" stroke="#c03040" stroke-width="1"/>
<path d="M349.3,626.7 L436,619" stroke="#c03040" stroke-width="1"/>
<path d="M444,569.5 L570.7,556.7" stroke="#c03040" stroke-width="1.2"/>
<path d="M444,624.7 L548,614.8" stroke="#c03040" stroke-width="1"/>
</svg>
<!-- status -->
<div class="r" style="left:1px;top:681px;width:898px;height:17px;background:#f0f0f0;border-top:1px solid #fafafa;border-radius:0 0 0 7px"></div>
<div class="tx" style="left:2px;top:685px;transform:scaleX(0.84)">Press F1 for help</div>
<div class="sp" style="left:562px;width:21px"></div>
<div class="sp" style="left:585px;width:58px"></div>
<div class="sp" style="left:645px;width:58px"></div>
<div class="sp" style="left:706px;width:57px"></div>
<div class="sp" style="left:766px;width:45px"></div>
<div class="sp" style="left:814px;width:45px"></div>
<div class="sp" style="left:862px;width:20px"></div>
<div class="tx" style="left:564px;top:685px;transform:scaleX(0.9)">cm</div>
<div class="tx" style="left:586px;top:685px;transform:scaleX(0.83)">X: 13.711</div>
<div class="tx" style="left:647px;top:685px;transform:scaleX(0.83)">Y: 9.300</div>
<div class="tx" style="left:708px;top:685px;transform:scaleX(0.83)">Z: 0.000</div>
<svg class="abs" style="left:884px;top:684px" width="14" height="13" viewBox="0 0 14 13"><path d="M13 2L2 13M13 6L6 13M13 10L10 13" stroke="#a0a0a0" stroke-width="1"/><path d="M14 3L3 14M14 7L7 14M14 11L11 14" stroke="#fff" stroke-width="1"/></svg>

</body></html>
